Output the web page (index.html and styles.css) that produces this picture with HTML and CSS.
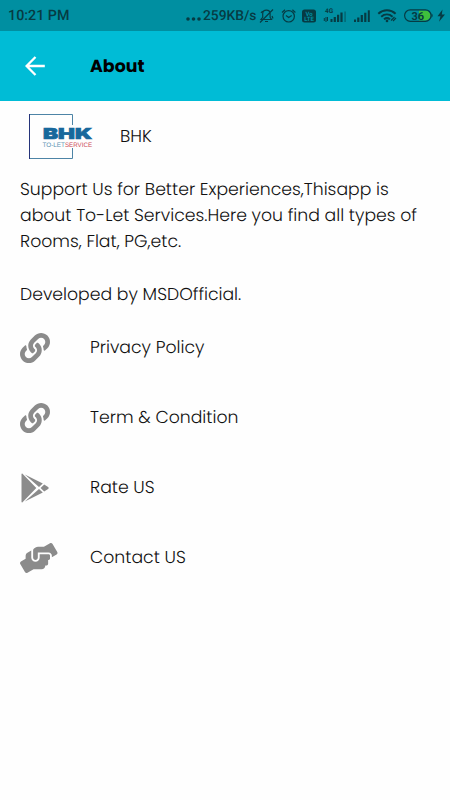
FILE: index.html
```html
<!DOCTYPE html>
<html lang="en">
<head>
  <meta charset="UTF-8">
  <title>About</title>
  <meta name="viewport" content="width=device-width, initial-scale=1">
  <link rel="stylesheet" href="styles.css">
</head>
<body>
  <div class="statusbar">
    <span class="time">10:21 PM</span>
    <svg class="dots" width="17" height="4" viewBox="0 0 17 4"><circle cx="2" cy="2" r="1.8"/><circle cx="7.5" cy="2" r="1.8"/><circle cx="13" cy="2" r="1.8"/></svg>
    <span class="speed">259KB/s</span>
    <svg class="status-icons" width="193" height="32" viewBox="257 0 193 32">
      <!-- muted bell -->
      <g class="line">
        <path d="M261 19.5h10.5l-1.4-2.2v-3.5c0-2-1.5-3.6-3.7-3.6s-3.7 1.6-3.7 3.6v3.5zM265 21.5h3M260 22.5l13-13M261 13l1.5-2M272 16l1 2.5"/>
      </g>
      <!-- alarm -->
      <g class="line">
        <circle cx="288.7" cy="16.3" r="5.7"/>
        <path d="M282 12.5l3-2.7M295.4 12.5l-3-2.7M286 15.5l2.7 2 3-2"/>
      </g>
      <!-- volte -->
      <rect x="302" y="9.5" width="14" height="13" rx="2.5"/>
      <text class="volte" x="309" y="15.6">Vo</text>
      <text class="volte" x="309" y="21.4">LTE</text>
      <!-- signals -->
      <text class="net" x="329" y="12.9">4G</text>
      <path d="M325.5 17h1v5h-1zM323.8 18h1v3h-1zM327 17h1v4h-1zM330.5 19h2v3h-2zM333.7 17h2.2v5h-2.2zM337 14.7h2.2V22H337zM340.4 12.5h2.2V22h-2.2z"/>
      <path class="faint" d="M344.2 11.5h1.8V22h-1.8z"/>
      <path d="M354 19.5h2V22h-2zM357.2 17.5h2.2V22h-2.2zM360.7 15h2.2v7h-2.2zM364.2 12.7h2.2V22h-2.2z"/>
      <path d="M367.8 10.3h2V22h-2z"/>
      <!-- wifi -->
      <path class="wifi" d="M378.3 13.8c5.1-4.6 12.2-4.6 17.3 0M381.2 16.7c3.4-2.9 8-2.9 11.4 0M384 19.3c2-1.6 4-1.6 6 0"/>
      <circle cx="387" cy="21" r="1.3"/>
      <path class="line" d="M391 20.5l3.5-3.5M393 21l3-3"/>
      <!-- battery -->
      <path class="charge" d="M419 10.5h6.5a5 5 0 0 1 0 10H419z"/>
      <rect class="battery" x="404.6" y="9.8" width="26.5" height="11.5" rx="5.7"/>
      <path d="M431.5 13.5c1.6.6 1.6 3.6 0 4.2z"/>
      <text class="percent" x="417.7" y="19.5">36</text>
      <path d="M442.5 9.5l-5 6.7h3l-1.5 5.6 6-7.2h-3.2z"/>
    </svg>
  </div>

  <div class="toolbar">
    <svg class="back" width="20" height="20" viewBox="0 0 20 20"><path d="M19.8 10H1.5M10.5 1L1.6 10l8.9 9"/></svg>
    <h1>About</h1>
  </div>

  <div class="content">
    <div class="app">
      <svg class="logo" width="80" height="50" viewBox="0 0 80 50">
        <path class="frame" d="M9 3.5h43.5V14M9 47.5h43.5V37"/>
        <path class="frame-left" d="M9.5 3v45"/>
        <text class="logo-name" x="23" y="28" textLength="49" lengthAdjust="spacingAndGlyphs">BHK</text>
        <text class="logo-tag" x="22.5" y="35.5" textLength="22.5" lengthAdjust="spacingAndGlyphs">TO-LET</text>
        <text class="logo-tag red" x="45" y="35.5" textLength="27" lengthAdjust="spacingAndGlyphs">SERVICE</text>
      </svg>
      <span class="app-name">BHK</span>
    </div>

    <p class="description">
      Support Us for Better Experiences,Thisapp is<br>
      about To-Let Services.Here you find all types of<br>
      Rooms, Flat, PG,etc.<br>
      <br>
      Developed by MSDOfficial.
    </p>

    <svg class="defs" width="0" height="0">
      <symbol id="link" viewBox="0 0 512 512"><path d="M326.612 185.391c59.747 59.809 58.927 155.698.36 214.59-.11.12-.24.25-.36.37l-67.2 67.2c-59.27 59.27-155.699 59.262-214.96 0-59.27-59.26-59.27-155.7 0-214.96l37.106-37.106c9.84-9.84 26.786-3.3 27.294 10.606.648 17.722 3.826 35.527 9.69 52.721 1.986 5.822.567 12.262-3.783 16.612l-13.087 13.087c-28.026 28.026-28.905 73.66-1.155 101.96 28.024 28.579 74.086 28.749 102.325.51l67.2-67.19c28.191-28.191 28.073-73.757 0-101.83-3.701-3.694-7.429-6.564-10.341-8.569a16.037 16.037 0 0 1-6.947-12.606c-.396-10.567 3.348-21.456 11.698-29.806l21.054-21.055c5.521-5.521 14.182-6.199 20.584-1.731a152.482 152.482 0 0 1 20.522 17.197zM467.547 44.449c-59.261-59.262-155.69-59.27-214.96 0l-67.2 67.2c-.12.12-.25.25-.36.37-58.566 58.892-59.387 154.781.36 214.59a152.454 152.454 0 0 0 20.521 17.196c6.402 4.468 15.064 3.789 20.584-1.731l21.054-21.055c8.35-8.35 12.094-19.239 11.698-29.806a16.037 16.037 0 0 0-6.947-12.606c-2.912-2.005-6.64-4.875-10.341-8.569-28.073-28.073-28.191-73.639 0-101.83l67.2-67.19c28.239-28.239 74.3-28.069 102.325.51 27.75 28.3 26.872 73.934-1.155 101.96l-13.087 13.087c-4.35 4.35-5.769 10.79-3.783 16.612 5.864 17.194 9.042 34.999 9.69 52.721.509 13.906 17.454 20.446 27.294 10.606l37.106-37.106c59.271-59.259 59.271-155.699.001-214.959z"/></symbol>
    </svg>

    <ul class="links">
      <li>
        <svg class="icon" width="30" height="30"><use href="#link"/></svg>
        <span>Privacy Policy</span>
      </li>
      <li>
        <svg class="icon" width="30" height="30"><use href="#link"/></svg>
        <span>Term &amp; Condition</span>
      </li>
      <li>
        <svg class="icon" width="30" height="30" viewBox="0 0 30 30"><path d="M1.5 1.2c0-.6.6-.8 1-.4L16.3 15 2.5 29.2c-.4.4-1 .2-1-.4zM4.8 1.4L22.8 10.4 19 13.9zM4.8 28.6L22.8 19.6 19 16.1zM20.6 15l3.6-3.4 3.9 2.4c.8.5.8 1.5 0 2l-3.9 2.4z"/></svg>
        <span>Rate US</span>
      </li>
      <li>
        <svg class="icon" width="37.5" height="30" viewBox="0 0 640 512"><path d="M488 192H336v56c0 39.7-32.3 72-72 72s-72-32.3-72-72V126.4l-64.9 39C107.8 176.9 96 197.8 96 220.2v47.3l-80 46.2C.7 322.5-4.6 342.1 4.3 357.4l80 138.6c8.8 15.3 28.4 20.5 43.7 11.7L231.4 448H368c35.3 0 64-28.7 64-64h16c17.7 0 32-14.3 32-32v-64h8c13.3 0 24-10.7 24-24v-48c0-13.3-10.7-24-24-24zm147.7-37.4L555.7 16C546.9.7 527.3-4.5 512 4.3L408.6 64H306.4c-12 0-23.7 3.4-33.9 9.7L239 94.6c-9.4 5.8-15 16.1-15 27.1V248c0 22.1 17.9 40 40 40s40-17.9 40-40v-88h184c30.9 0 56 25.1 56 56v28.5l80-46.2c15.3-8.9 20.5-28.4 11.7-43.7z"/></svg>
        <span>Contact US</span>
      </li>
    </ul>
  </div>
</body>
</html>
```
FILE: styles.css
```css
body {
  margin: 0;
  background: #fefefe;
  color: #111;
  font-family: Poppins, Inter, sans-serif;
  font-weight: 300;
  font-size: 17.25px;
  text-rendering: geometricPrecision;
}
.statusbar {
  display: flex;
  align-items: center;
  height: 31px;
  background: #008fa1;
  color: #063b43;
  fill: #063b43;
  font-family: Roboto, sans-serif;
  font-weight: 500;
  font-size: 14.3px;
}
.time, .speed {
  padding-top: 1px;
}
.time {
  width: 178px;
  padding-left: 8px;
}
.dots {
  margin-top: 7px;
}
.speed {
  width: 54px;
  font-size: 13.8px;
}
.status-icons {
  flex: none;
}
.line, .wifi, .battery {
  fill: none;
  stroke: #063b43;
  stroke-width: 1.2;
}
.wifi {
  stroke-width: 2;
}
.faint {
  opacity: 0.4;
}
.charge {
  fill: #3fbf3c;
}
.volte, .net, .percent {
  font-weight: 700;
  text-anchor: middle;
}
.volte {
  font-size: 6px;
  fill: #008fa1;
}
.net {
  font-size: 6.5px;
}
.percent {
  font-size: 11px;
}

.toolbar {
  display: flex;
  align-items: center;
  height: 70px;
  padding-left: 25px;
  box-sizing: border-box;
  background: #00bcd6;
}
.back {
  fill: none;
  stroke: #fff;
  stroke-width: 2.3;
}
h1 {
  margin: 0 0 0 45px;
  padding-top: 2px;
  font-size: 17.4px;
  font-weight: 700;
  color: #000;
}

.content {
  padding: 10px 20px;
}
.app {
  display: flex;
  align-items: center;
  gap: 20px;
  height: 50px;
}
.app-name {
  padding-top: 2px;
}
.frame, .frame-left {
  fill: none;
  stroke: #4d84a6;
}
.frame-left {
  stroke: #26347a;
}
.logo-name {
  font-family: Inter, sans-serif;
  font-size: 15px;
  font-weight: 900;
  fill: #17689c;
  stroke: #17689c;
  stroke-width: 0.7;
}
.logo-tag {
  font-family: "Liberation Sans", sans-serif;
  font-size: 6.5px;
  font-weight: 400;
  fill: #5b93b3;
}
.red {
  fill: #cc4a58;
}
.description {
  margin: 15.5px 0 0;
  line-height: 26.3px;
  white-space: nowrap;
}

.links {
  list-style: none;
  margin: 5px 0 0;
  padding: 0;
}
.links li {
  display: grid;
  grid-template-columns: 70px 1fr;
  align-items: center;
  height: 70px;
}
.icon {
  fill: #8b8b8b;
}
.defs {
  display: block;
}
```
